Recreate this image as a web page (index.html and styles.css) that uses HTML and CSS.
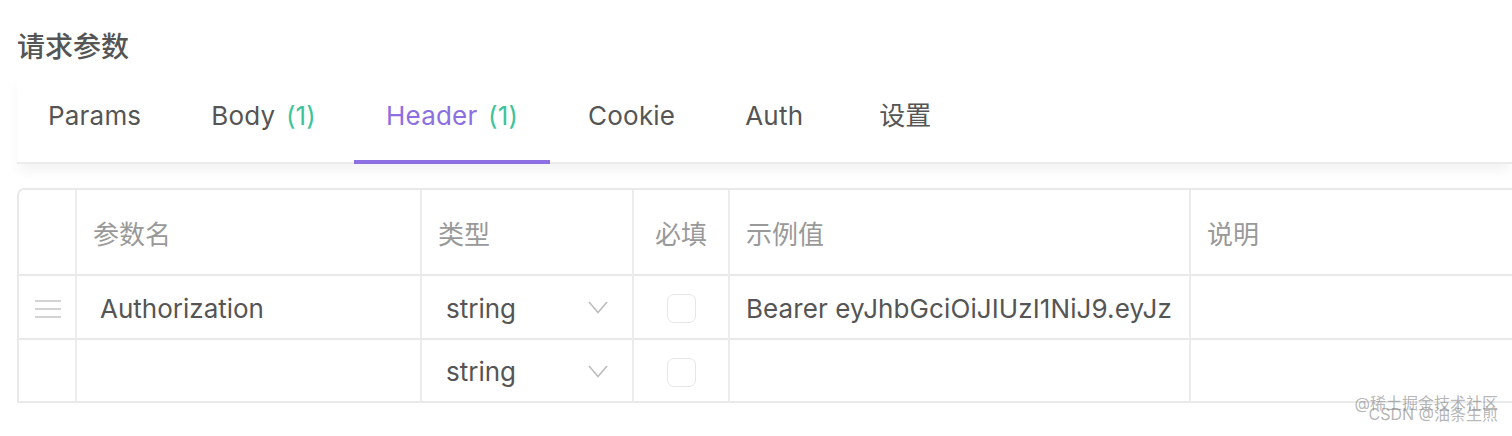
FILE: index.html
```html
<!DOCTYPE html>
<html lang="zh-CN">
<head>
<meta charset="utf-8">
<title>请求参数</title>
<link rel="stylesheet" href="styles.css">
</head>
<body>
<div class="page">
  <h2 class="title">请求参数</h2>
  <div class="tabs">
    <div class="tab">Params</div>
    <div class="tab">Body <span class="count">(1)</span></div>
    <div class="tab active">Header <span class="count">(1)</span></div>
    <div class="tab">Cookie</div>
    <div class="tab">Auth</div>
    <div class="tab cjk">设置</div>
  </div>
  <div class="table-wrap">
    <table class="params">
      <colgroup>
        <col class="c-drag"><col class="c-name"><col class="c-type"><col class="c-req"><col class="c-ex"><col class="c-desc">
      </colgroup>
      <thead>
        <tr class="head">
          <th></th>
          <th>参数名</th>
          <th>类型</th>
          <th class="center">必填</th>
          <th>示例值</th>
          <th>说明</th>
        </tr>
      </thead>
      <tbody>
        <tr class="row r1">
          <td class="drag"><span class="handle"><i></i><i></i><i></i></span></td>
          <td class="name"><span class="txt">Authorization</span></td>
          <td class="type"><div class="select"><span class="txt">string</span><svg class="chev" width="20" height="13" viewBox="0 0 20 13"><path d="M1 1 L10 11.5 L19 1" fill="none" stroke="#bdbdbd" stroke-width="1.6"/></svg></div></td>
          <td class="center"><span class="check"></span></td>
          <td class="ex"><span class="txt">Bearer eyJhbGciOiJIUzI1NiJ9.eyJz</span></td>
          <td></td>
        </tr>
        <tr class="row r2">
          <td></td>
          <td></td>
          <td class="type"><div class="select"><span class="txt">string</span><svg class="chev" width="20" height="13" viewBox="0 0 20 13"><path d="M1 1 L10 11.5 L19 1" fill="none" stroke="#bdbdbd" stroke-width="1.6"/></svg></div></td>
          <td class="center"><span class="check"></span></td>
          <td></td>
          <td></td>
        </tr>
      </tbody>
    </table>
  </div>
  <div class="watermark">
    <span class="wm1">@稀土掘金技术社区</span>
    <span class="wm2">CSDN @油条生煎</span>
  </div>
</div>
</body>
</html>
```
FILE: styles.css
```css
html, body {
  margin: 0;
  padding: 0;
  background: #fff;
  overflow: hidden;
}
body {
  width: 1512px;
  height: 436px;
  font-family: Inter, "Noto Sans CJK SC", sans-serif;
  color: #555;
}
.page {
  position: relative;
  height: 436px;
  padding-left: 17px;
  box-sizing: border-box;
}
.title {
  margin: 0;
  padding-top: 30px;
  font-size: 28px;
  line-height: 34px;
  font-weight: 500;
  color: #555;
}
.tabs {
  margin-top: 8px;
  display: flex;
  border-bottom: 2px solid #ebebeb;
  box-shadow: 0 9px 12px -2px rgba(0, 0, 0, 0.05);
}
.tab {
  height: 88px;
  line-height: 88px;
  padding: 0 32px;
  margin-right: 6px;
  font-size: 26px;
  letter-spacing: 0.2px;
  word-spacing: 3px;
  color: #555;
  border-bottom: 4px solid transparent;
  margin-bottom: -2px;
  white-space: nowrap;
}
.tab:first-child {
  padding-left: 31px;
}
.tab.cjk {
  letter-spacing: 0;
  padding-left: 38px;
}
.tab.active {
  color: #8c6fe2;
  border-bottom-color: #8c6fe2;
}
.count {
  color: #3ec49b;
}
.table-wrap {
  margin-top: 24px;
  width: 1600px;
}
.params {
  border-collapse: separate;
  border-spacing: 0;
  table-layout: fixed;
  width: 1600px;
  font-size: 26px;
  border-top: 2px solid #e9e9e9;
  border-left: 2px solid #e9e9e9;
  border-top-left-radius: 7px;
}
.c-drag { width: 58px; }
.c-name { width: 345px; }
.c-type { width: 212px; }
.c-req { width: 96px; }
.c-ex { width: 461px; }
.params th, .params td {
  border-right: 2px solid #ececec;
  border-bottom: 2px solid #e9e9e9;
  padding: 0 0 0 16px;
  text-align: left;
  white-space: nowrap;
  overflow: hidden;
}
.params th {
  height: 84px;
  font-weight: 400;
  color: #999;
}
.params th:first-child, .params td:first-child {
  padding: 0;
}
.params th.center, .params td.center {
  text-align: center;
  padding: 0;
}
.row.r1 td { height: 62px; }
.row.r2 td { height: 61px; }
.txt {
  position: relative;
  top: 1px;
}
.params td.name { padding-left: 23px; }
.params td.ex { padding-left: 16px; letter-spacing: 0.1px; }
.params td.drag {
  text-align: center;
}
.handle {
  display: inline-flex;
  flex-direction: column;
  gap: 6px;
  width: 26px;
  vertical-align: middle;
  margin-left: 1px;
}
.handle i {
  display: block;
  height: 2px;
  background: #d2d2d2;
}
.params td.type { padding-left: 24px; padding-right: 24px; }
.select {
  display: flex;
  align-items: center;
  justify-content: space-between;
}
.chev { display: block; margin-top: 1px; }
.check {
  display: inline-block;
  width: 27px;
  height: 27px;
  border: 1.5px solid #e6e6e6;
  border-radius: 7px;
  vertical-align: middle;
}
.watermark {
  position: absolute;
  right: 14px;
  bottom: 8px;
  width: 150px;
  height: 30px;
  font-size: 16px;
  color: rgba(120, 120, 120, 0.55);
  white-space: nowrap;
}
.wm1 {
  position: absolute;
  right: 0;
  top: -8px;
}
.wm2 {
  position: absolute;
  right: 0;
  top: 3px;
}
```
